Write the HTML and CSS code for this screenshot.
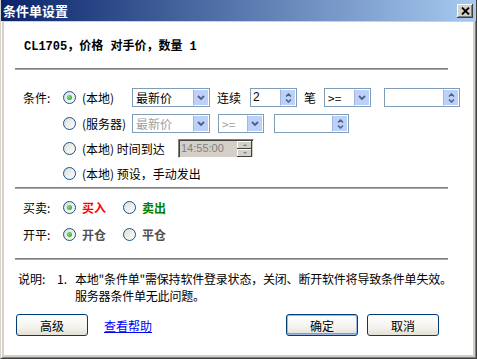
FILE: index.html
```html
<!DOCTYPE html>
<html>
<head>
  <title>条件单设置</title>
  <meta charset="utf-8">
  <link rel="stylesheet" href="styles.css">
</head>
<body>
  <!-- window -->
  <div class="window">
    <div class="titlebar">
      <span class="title">条件单设置</span>
      <span class="close">
        <svg width="9" height="8" viewBox="0 0 9 8"><path d="M1 0.5 L8 7.5 M8 0.5 L1 7.5" stroke="#000" stroke-width="1.8" fill="none"/></svg>
      </span>
    </div>
    <div class="frame">
      <div class="client">
        <div class="summary">CL1705，价格 对手价，数量 1</div>
        <div class="sep"></div>

        <div class="row r1">
          <span class="label">条件:</span>
          <span class="opt w69"><i class="radio on"></i>(本地)</span>
          <div class="select w78"><span class="val">最新价</span><span class="drop"><svg width="8" height="5" viewBox="0 0 8 5"><path d="M1 1 L4 4 L7 1" stroke="#4d6185" stroke-width="1.8" fill="none"/></svg></span></div>
          <span class="word g7">连续</span>
          <div class="spin w47 g9"><span class="val">2</span><span class="btns"><svg width="7" height="4" viewBox="0 0 7 4"><path d="M1 3.5 L3.5 1 L6 3.5" stroke="#4d6185" stroke-width="1.5" fill="none"/></svg><svg width="7" height="4" viewBox="0 0 7 4"><path d="M1 0.5 L3.5 3 L6 0.5" stroke="#4d6185" stroke-width="1.5" fill="none"/></svg></span></div>
          <span class="word g7">笔</span>
          <div class="select w47 g8"><span class="val">&gt;=</span><span class="drop"><svg width="8" height="5" viewBox="0 0 8 5"><path d="M1 1 L4 4 L7 1" stroke="#4d6185" stroke-width="1.8" fill="none"/></svg></span></div>
          <div class="spin w76 g13"><span class="val"></span><span class="btns"><svg width="7" height="4" viewBox="0 0 7 4"><path d="M1 3.5 L3.5 1 L6 3.5" stroke="#4d6185" stroke-width="1.5" fill="none"/></svg><svg width="7" height="4" viewBox="0 0 7 4"><path d="M1 0.5 L3.5 3 L6 0.5" stroke="#4d6185" stroke-width="1.5" fill="none"/></svg></span></div>
        </div>

        <div class="row r2">
          <span class="label"></span>
          <span class="opt w69"><i class="radio"></i>(服务器)</span>
          <div class="select w78 off"><span class="val">最新价</span><span class="drop"><svg width="8" height="5" viewBox="0 0 8 5"><path d="M1 1 L4 4 L7 1" stroke="#4d6185" stroke-width="1.8" fill="none"/></svg></span></div>
          <div class="select w46 g8 off"><span class="val">&gt;=</span><span class="drop"><svg width="8" height="5" viewBox="0 0 8 5"><path d="M1 1 L4 4 L7 1" stroke="#4d6185" stroke-width="1.8" fill="none"/></svg></span></div>
          <div class="spin w75 g10"><span class="val"></span><span class="btns"><svg width="7" height="4" viewBox="0 0 7 4"><path d="M1 3.5 L3.5 1 L6 3.5" stroke="#4d6185" stroke-width="1.5" fill="none"/></svg><svg width="7" height="4" viewBox="0 0 7 4"><path d="M1 0.5 L3.5 3 L6 0.5" stroke="#4d6185" stroke-width="1.5" fill="none"/></svg></span></div>
        </div>

        <div class="row r3">
          <span class="label"></span>
          <span class="opt w115"><i class="radio"></i>(本地) 时间到达</span>
          <div class="timebox"><span class="val">14:55:00</span><span class="tbtns"><b><i class="up"></i></b><b><i class="down"></i></b></span></div>
        </div>

        <div class="row r4">
          <span class="label"></span>
          <span class="opt"><i class="radio"></i>(本地) 预设，手动发出</span>
        </div>

        <div class="sep s2"></div>

        <div class="row r5">
          <span class="label">买卖:</span>
          <span class="opt w60"><i class="radio on"></i><b class="buy">买入</b></span>
          <span class="opt"><i class="radio"></i><b class="sell">卖出</b></span>
        </div>
        <div class="row r6">
          <span class="label">开平:</span>
          <span class="opt w60"><i class="radio on"></i><b class="pos">开仓</b></span>
          <span class="opt"><i class="radio"></i><b class="pos">平仓</b></span>
        </div>

        <div class="sep s3"></div>

        <div class="note">
          <span class="nlabel">说明:</span>
          <span class="nnum">1.</span>
          <span class="ntext">本地"条件单"需保持软件登录状态，关闭、断开软件将导致条件单失效。<br>服务器条件单无此问题。</span>
        </div>

        <div class="buttons">
          <button class="btn first">高级</button>
          <a class="help" href="#">查看帮助</a>
          <button class="btn ok">确定</button>
          <button class="btn cancel">取消</button>
        </div>
      </div>
    </div>
  </div>
  <!-- end of window -->
</body>
</html>
```

FILE: styles.css
```css
body {
  margin: 0;
  font-family: "Noto Sans CJK SC", sans-serif;
  font-size: 12px;
  color: #000;
}
.window {
  width: 477px;
  height: 359px;
  box-sizing: border-box;
  display: flex;
  flex-direction: column;
  background: #d4d0c8;
  border-left: 1px solid #d4d0c8;
  border-right: 1px solid #404040;
  border-bottom: 1px solid #404040;
  box-shadow: inset 1px 0 #fff, inset -1px -1px #808080;
}
.titlebar {
  height: 21px;
  flex: none;
  display: flex;
  justify-content: space-between;
  align-items: flex-start;
  padding: 0 3px 0 2px;
  background: linear-gradient(to right, #0a246a, #a6caf0);
}
.title {
  color: #fff;
  font-weight: bold;
  font-size: 13px;
  line-height: 21px;
}
.close {
  width: 16px;
  height: 14px;
  margin-top: 4px;
  box-sizing: border-box;
  display: flex;
  align-items: center;
  justify-content: center;
  background: #d4d0c8;
  box-shadow: inset -1px -1px #404040, inset 1px 1px #fff, inset -2px -2px #808080;
}
.frame {
  flex: 1;
  padding: 1px 3px 3px 3px;
  display: flex;
}
.client {
  flex: 1;
  background: #fff;
  padding-left: 11px;
}
.summary {
  margin: 17px 0 0 9px;
  line-height: 16px;
  font-weight: bold;
  font-family: "Liberation Mono", "Noto Sans CJK SC", monospace;
}
.sep {
  width: 433px;
  height: 1px;
  margin-top: 13px;
  border-top: 1px solid #808080;
  background: #a8a8a8;
}
.sep.s2 { margin-top: 4px; }
.sep.s3 { margin-top: 14px; }

.row {
  display: flex;
  align-items: center;
  height: 19px;
  line-height: 19px;
}
.r1 { margin-top: 18px; }
.r2 { margin-top: 7px; }
.r3 { margin-top: 6px; }
.r4 { margin-top: 6px; }
.r5 { margin-top: 9px; }
.r6 { margin-top: 8px; }

.label {
  width: 40px;
  margin-left: 8px;
  flex: none;
}
.opt {
  display: flex;
  align-items: center;
  flex: none;
}
.w60 { width: 60px; }
.w69 { width: 69px; }
.w115 { width: 115px; }
.g7 { margin-left: 7px; }
.g8 { margin-left: 8px; }
.g9 { margin-left: 9px; }
.g10 { margin-left: 10px; }
.g13 { margin-left: 13px; }

.radio {
  width: 13px;
  height: 13px;
  box-sizing: border-box;
  border: 1px solid #1c5180;
  border-radius: 50%;
  margin-right: 6px;
  background: linear-gradient(135deg, #dcdcd6, #fff);
  display: flex;
  align-items: center;
  justify-content: center;
}
.radio.on::after {
  content: "";
  width: 5px;
  height: 5px;
  border-radius: 50%;
  background: radial-gradient(circle at 35% 35%, #72e36d, #21a121);
}
.buy { color: #ff0000; }
.sell { color: #008000; }
.pos { color: #505050; }

.select,
.spin {
  height: 19px;
  box-sizing: border-box;
  border: 1px solid #7f9db9;
  background: #fff;
  display: flex;
  flex: none;
}
.w46 { width: 46px; }
.w47 { width: 47px; }
.w75 { width: 75px; }
.w76 { width: 76px; }
.w78 { width: 78px; }
.val {
  flex: 1;
  padding-left: 3px;
  line-height: 17px;
  overflow: hidden;
}
.spin .val { font-family: "Liberation Sans", sans-serif; padding-left: 2px; }
.select .val { white-space: nowrap; }
.select.off .val { color: #a0a0a0; }
.drop,
.btns {
  width: 16px;
  flex: none;
  box-sizing: border-box;
  border: 1px solid #fff;
  border-left: 1px solid #9fb6e0;
  background: #bcd0f8;
  display: flex;
  align-items: center;
  justify-content: center;
}
.btns {
  flex-direction: column;
  gap: 2px;
}

.timebox {
  width: 76px;
  height: 19px;
  box-sizing: border-box;
  display: flex;
  align-items: center;
  background: #d4d0c8;
  border: 1px solid;
  border-color: #808080 #fff #fff #808080;
  box-shadow: inset 1px 1px #404040;
}
.timebox .val {
  color: #808080;
  font-family: "Liberation Sans", sans-serif;
  font-size: 11px;
  padding-left: 2px;
}
.tbtns {
  width: 15px;
  margin-right: 1px;
  display: flex;
  flex-direction: column;
}
.tbtns b {
  height: 8px;
  display: flex;
  align-items: center;
  justify-content: center;
  background: #d4d0c8;
  box-shadow: inset -1px -1px #404040, inset 1px 1px #fff;
}
.tbtns i {
  width: 0;
  height: 0;
  border-left: 2px solid transparent;
  border-right: 2px solid transparent;
}
.tbtns .up { border-bottom: 2px solid #808080; }
.tbtns .down { border-top: 2px solid #808080; }

.note {
  display: flex;
  margin-top: 10px;
  line-height: 17px;
}
.nlabel {
  width: 39px;
  margin-left: 3px;
  flex: none;
}
.nnum {
  width: 18px;
  flex: none;
}
.ntext {
  white-space: nowrap;
  letter-spacing: -0.2px;
}

.buttons {
  width: 433px;
  display: flex;
  align-items: center;
  margin-top: 10px;
}
.btn {
  width: 72px;
  height: 22px;
  padding: 0;
  font-family: "Noto Sans CJK SC", sans-serif;
  font-size: 12px;
  color: #000;
  border: 1px solid #003c74;
  border-radius: 3px;
  background: linear-gradient(#ffffff, #f4f3ee 60%, #e3e0d6);
}
.btn.first { margin-left: 1px; }
.btn.ok {
  margin-left: auto;
  box-shadow: inset 0 0 0 1px #9fb9e8, inset 0 -1px 0 1px #7b9de0;
}
.btn.cancel {
  margin-left: 9px;
  margin-right: 9px;
}
.help {
  margin-left: 16px;
  color: #0000ff;
}
```
